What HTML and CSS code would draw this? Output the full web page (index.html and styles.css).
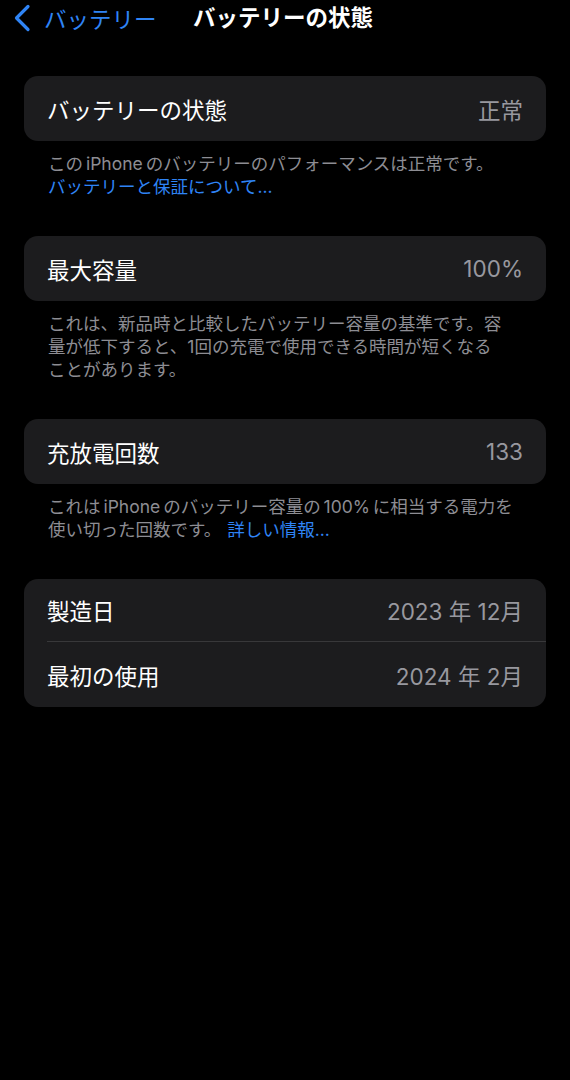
FILE: index.html
```html
<!DOCTYPE html>
<html lang="ja">
<head>
    <meta charset="UTF-8">
    <meta name="viewport" content="width=device-width, initial-scale=1.0">
    <title>バッテリーの状態</title>
    <link rel="stylesheet" href="styles.css">
</head>
<body>
    <header class="nav">
      <a class="nav-back" href="#">
        <svg class="nav-back-icon" width="20" height="30" viewBox="0 0 20 30" aria-hidden="true">
          <path d="M16 3.5 L4.5 15 L16 26.5" fill="none" stroke="currentColor" stroke-width="3.2" stroke-linecap="round" stroke-linejoin="round"/>
        </svg>
        <span>バッテリー</span>
      </a>
      <h1 class="nav-title">バッテリーの状態</h1>
      <span></span>
    </header>

    <main class="settings">
      <section class="group">
        <div class="card">
          <div class="row">
            <span class="row-label">バッテリーの状態</span>
            <span class="row-value">正常</span>
          </div>
        </div>
        <p class="group-footer">
          この iPhone のバッテリーのパフォーマンスは正常です。<br>
          <a class="link" href="#">バッテリーと保証について...</a>
        </p>
      </section>

      <section class="group">
        <div class="card">
          <div class="row">
            <span class="row-label">最大容量</span>
            <span class="row-value">100%</span>
          </div>
        </div>
        <p class="group-footer">
          これは、新品時と比較したバッテリー容量の基準です。容<br>量が低下すると、1回の充電で使用できる時間が短くなる<br>ことがあります。
        </p>
      </section>

      <section class="group">
        <div class="card">
          <div class="row">
            <span class="row-label">充放電回数</span>
            <span class="row-value">133</span>
          </div>
        </div>
        <p class="group-footer">
          これは iPhone のバッテリー容量の 100% に相当する電力を<br>使い切った回数です。 <a class="link link-more" href="#">詳しい情報...</a>
        </p>
      </section>

      <section class="group">
        <div class="card">
          <div class="row">
            <span class="row-label">製造日</span>
            <span class="row-value">2023 年 12月</span>
          </div>
          <div class="row">
            <span class="row-label">最初の使用</span>
            <span class="row-value">2024 年 2月</span>
          </div>
        </div>
      </section>
    </main>
</body>
</html>
```

FILE: styles.css
```css
html,
body {
  height: 100%;
}

body {
  margin: 0;
  padding: 0;
  background-color: #000000;
  color: #ffffff;
  font-family: "Inter", "Noto Sans CJK JP", sans-serif;
}

.nav {
  display: grid;
  grid-template-columns: 1fr auto 1fr;
  align-items: center;
  height: 36px;
}

.nav-back {
  display: flex;
  align-items: center;
  gap: 12px;
  padding-left: 12px;

  font-size: 22.5px;
  color: #2f84f5;
  text-decoration: none;
}

.nav-back-icon {
  flex-shrink: 0;
}

.nav-title {
  margin: 0;
  margin-left: -4px;
  font-size: 22.5px;
  font-weight: 700;
  line-height: 36px;
}

.settings {
  padding: 40px 24px 0;
}

.group {
  margin-bottom: 38px;
}

.card {
  background-color: #1c1c1e;
  border-radius: 14px;
  overflow: hidden;
}

.row {
  display: flex;
  align-items: center;
  justify-content: space-between;
  height: 65px;
  margin-left: 23px;
  padding-right: 23px;

  font-size: 22.5px;
}

.group:last-child .row {
  height: 62px;
}

.row + .row {
  border-top: 1px solid #38383a;
}

.group:last-child .row + .row {
  height: 65px;
}

.row-value {
  color: #98989f;
}

.group-footer {
  margin: 0;
  padding: 11px 0 0 24px;

  font-size: 17.5px;
  line-height: 23px;
  word-spacing: -2px;
  color: #8d8d93;
}

.link {
  color: #2f84f5;
  text-decoration: none;
}

.link-more {
  margin-left: 3px;
}
```
